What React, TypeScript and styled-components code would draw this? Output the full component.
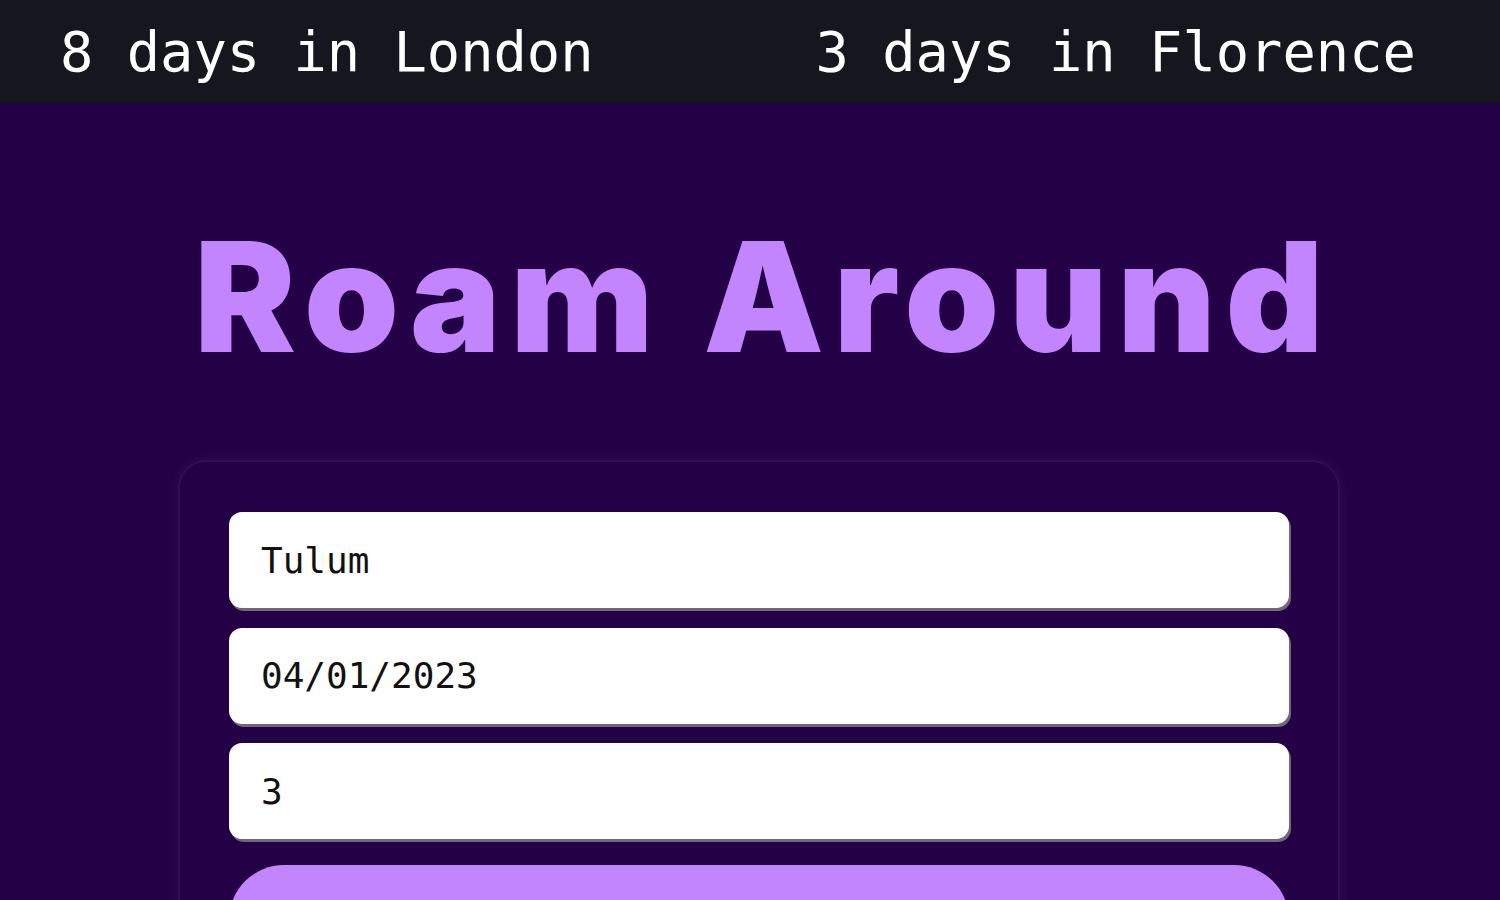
import React from "react";
import styled, { createGlobalStyle } from "styled-components";

const Global = createGlobalStyle`
    html, body {
        margin: 0;
        padding: 0;
        background: #240046;
        overflow: hidden;
    }
`;

const Ticker = styled.div`
    height: 103px;
    background: #16161f;
    display: flex;
    align-items: center;
    gap: 222px;
    padding-left: 60px;
    overflow: hidden;
    white-space: nowrap;
`;
const TickerItem = styled.span`
    font-family: "DejaVu Sans Mono", "Liberation Mono", monospace;
    font-size: 55.4px;
    color: #fff;
`;
const Main = styled.main`
    display: flex;
    flex-direction: column;
    align-items: center;
    padding: 118px 0 0 18px;
`;
const Title = styled.h1`
    margin: 0 -9.6px 0 0;
    font-family: Inter, "Noto Sans", sans-serif;
    font-weight: 900;
    font-size: 152px;
    line-height: 1;
    letter-spacing: 9.6px;
    color: #c385fd;
`;
const Card = styled.form`
    margin-top: 89px;
    width: 1158px;
    box-sizing: border-box;
    padding: 50px 49px 40px;
    border-radius: 26px;
    background: #240046;
    box-shadow: 0 0 0 2px rgba(255, 255, 255, 0.035), 0 0 14px rgba(160, 110, 220, 0.16);
    display: flex;
    flex-direction: column;
    gap: 19.5px;
`;
const Field = styled.input`
    height: 96px;
    box-sizing: border-box;
    border: none;
    border-radius: 13px;
    background: #fff;
    box-shadow: 2px 3px 0 #6e6878;
    padding: 0 32px;
    font-family: "DejaVu Sans Mono", "Liberation Mono", monospace;
    font-size: 36px;
    color: #111;
    outline: none;
`;
const Submit = styled.button`
    margin-top: 6px;
    height: 110px;
    border: none;
    border-radius: 56px;
    background: #c385fd;
`;

export default () => {
    return (
        <>
            <Global />
            <Ticker>
                <TickerItem>8 days in London</TickerItem>
                <TickerItem>3 days in Florence</TickerItem>
            </Ticker>
            <Main>
                <Title>Roam Around</Title>
                <Card onSubmit={(e) => e.preventDefault()}>
                    <Field defaultValue='Tulum' />
                    <Field defaultValue='04/01/2023' />
                    <Field defaultValue='3' />
                    <Submit type='submit' aria-label='Plan my trip' />
                </Card>
            </Main>
        </>
    );
};
